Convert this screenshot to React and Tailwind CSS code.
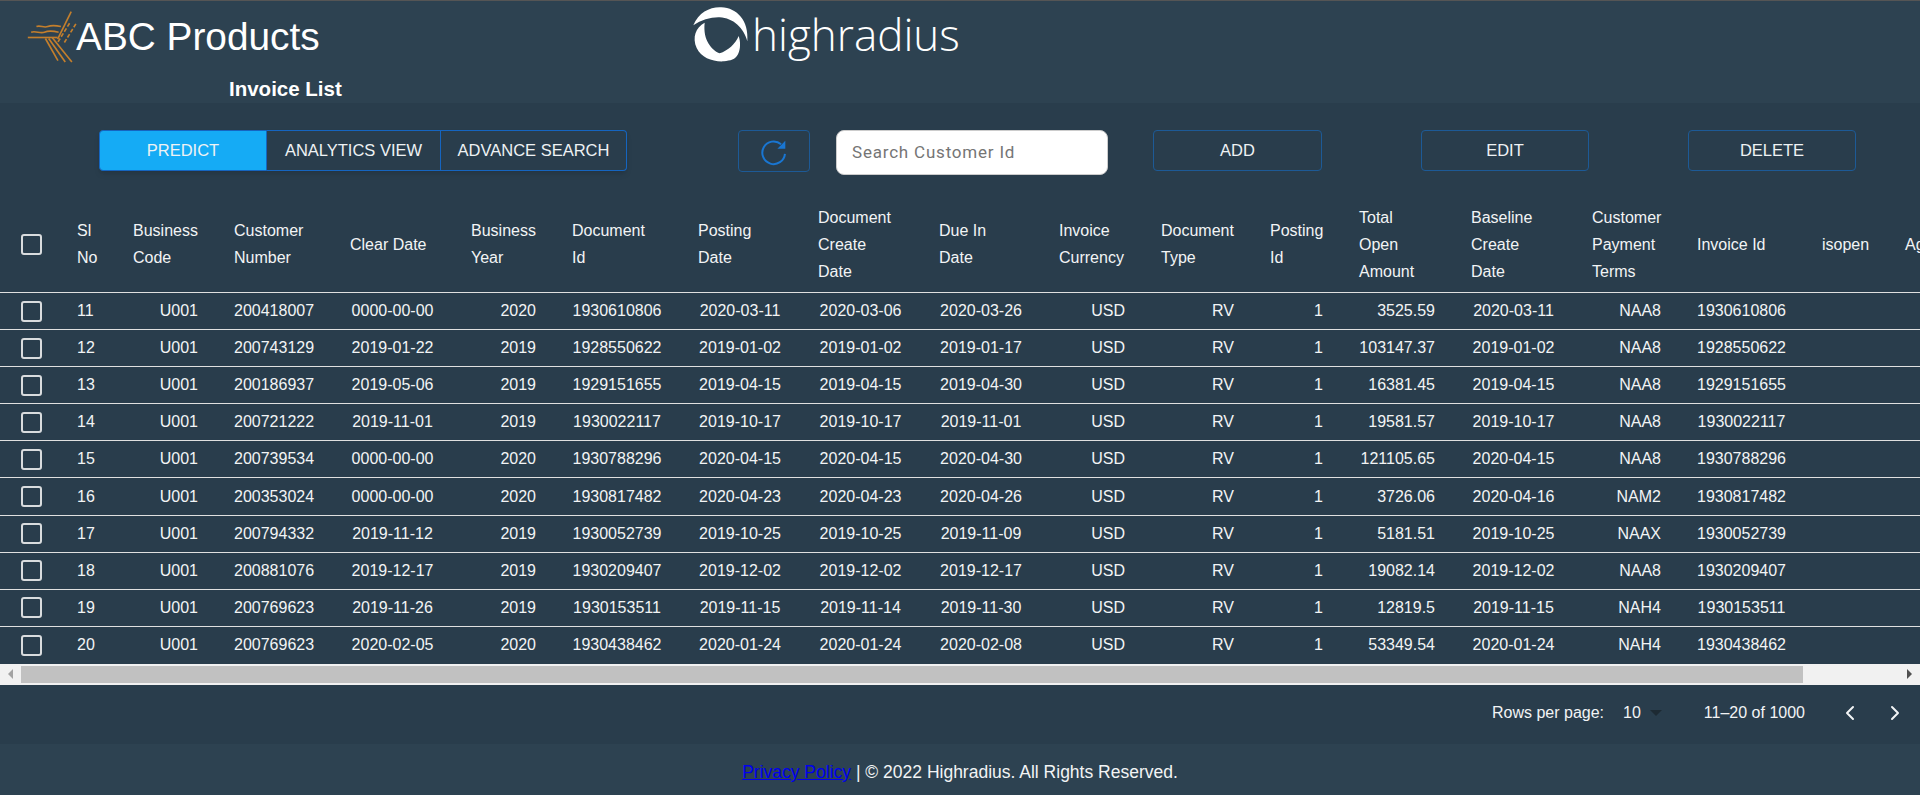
import { ChevronLeft, ChevronRight } from 'lucide-react';

const columns = [
  { label: 'Sl\nNo', width: 56 },
  { label: 'Business\nCode', width: 101 },
  { label: 'Customer\nNumber', width: 116 },
  { label: 'Clear Date', width: 121 },
  { label: 'Business\nYear', width: 101 },
  { label: 'Document\nId', width: 126 },
  { label: 'Posting\nDate', width: 120 },
  { label: 'Document\nCreate\nDate', width: 121 },
  { label: 'Due In\nDate', width: 120 },
  { label: 'Invoice\nCurrency', width: 102 },
  { label: 'Document\nType', width: 109 },
  { label: 'Posting\nId', width: 89 },
  { label: 'Total\nOpen\nAmount', width: 112 },
  { label: 'Baseline\nCreate\nDate', width: 121 },
  { label: 'Customer\nPayment\nTerms', width: 105 },
  { label: 'Invoice Id', width: 125 },
  { label: 'isopen', width: 83 },
  { label: 'Aging Bucket', width: 133 },
];

const rows = [
  [11, 'U001', '200418007', '0000-00-00', 2020, '1930610806', '2020-03-11', '2020-03-06', '2020-03-26', '3525.59', '2020-03-11', 'NAA8'],
  [12, 'U001', '200743129', '2019-01-22', 2019, '1928550622', '2019-01-02', '2019-01-02', '2019-01-17', '103147.37', '2019-01-02', 'NAA8'],
  [13, 'U001', '200186937', '2019-05-06', 2019, '1929151655', '2019-04-15', '2019-04-15', '2019-04-30', '16381.45', '2019-04-15', 'NAA8'],
  [14, 'U001', '200721222', '2019-11-01', 2019, '1930022117', '2019-10-17', '2019-10-17', '2019-11-01', '19581.57', '2019-10-17', 'NAA8'],
  [15, 'U001', '200739534', '0000-00-00', 2020, '1930788296', '2020-04-15', '2020-04-15', '2020-04-30', '121105.65', '2020-04-15', 'NAA8'],
  [16, 'U001', '200353024', '0000-00-00', 2020, '1930817482', '2020-04-23', '2020-04-23', '2020-04-26', '3726.06', '2020-04-16', 'NAM2'],
  [17, 'U001', '200794332', '2019-11-12', 2019, '1930052739', '2019-10-25', '2019-10-25', '2019-11-09', '5181.51', '2019-10-25', 'NAAX'],
  [18, 'U001', '200881076', '2019-12-17', 2019, '1930209407', '2019-12-02', '2019-12-02', '2019-12-17', '19082.14', '2019-12-02', 'NAA8'],
  [19, 'U001', '200769623', '2019-11-26', 2019, '1930153511', '2019-11-15', '2019-11-14', '2019-11-30', '12819.5', '2019-11-15', 'NAH4'],
  [20, 'U001', '200769623', '2020-02-05', 2020, '1930438462', '2020-01-24', '2020-01-24', '2020-02-08', '53349.54', '2020-01-24', 'NAH4'],
];

function Checkbox() {
  return <div className="w-[21px] h-[21px] ml-[21px] border-2 border-[#d9dcde] rounded-[3px]" />;
}

function AbcLogo() {
  return (
    <svg viewBox="50 30 150 160" className="w-[50px] h-[53px] shrink-0 text-[#c47f2c]" fill="none" stroke="currentColor" strokeWidth="5">
      <path d="M52 113H142" />
      <path d="M183 35L142 118" />
      <path d="M105 116L143 183" />
      <path d="M115 116L165 187" />
      <path d="M126 114L185 187" />
      <path d="M78 80C90 75 100 85 112 80S135 76 152 80" />
      <path d="M62 97C75 92 90 102 102 97S128 93 145 97" />
      <path d="M178 70L142 128" strokeDasharray="12 6" />
      <path d="M197 72L160 132" strokeDasharray="12 6" />
    </svg>
  );
}

function HighradiusMark() {
  return (
    <svg viewBox="0 0 192 180" className="w-[64px] h-[60px] shrink-0" fill="#fff">
      <path d="M16 64C32 24 68 8 100 10C147 12 183 50 178 112C168 72 135 42 95 40C70 39 40 47 16 64Z" />
      <path d="M50 56C23 70 12 100 26 132C40 162 75 174 108 172C127 170 142 167 150 151C158 135 158 113 152 96C142 120 120 140 95 148C72 138 44 110 50 56Z" />
    </svg>
  );
}

function OutlineButton({ children, className }) {
  return (
    <button className={`h-[41px] border border-[#1d5a96] rounded-[4px] text-[16.5px] text-[#eef2f4] ${className}`}>
      {children}
    </button>
  );
}

export default function App() {
  return (
    <div className="w-[1920px] h-[795px] overflow-hidden flex flex-col bg-[#293d4c] text-[#f2f4f5] font-['Liberation_Sans',Arial,sans-serif]">
      {/* header */}
      <div className="h-[103px] shrink-0 flex border-t border-[#555] bg-[#2d4251]">
        <div className="w-[688px] shrink-0">
          <div className="flex items-center pl-[27px] pt-[9px]">
            <AbcLogo />
            <span className="text-[38.8px] leading-[53px] text-white -ml-[1px]">ABC Products</span>
          </div>
          <h1 className="ml-[229px] mt-[12px] text-[20.5px] leading-[28px] font-bold text-white">Invoice List</h1>
        </div>
        <div className="flex items-start pt-[3px]">
          <HighradiusMark />
          <span className="font-['Open_Sans',sans-serif] font-light text-[44px] leading-[60px] text-white">highradius</span>
        </div>
      </div>

      {/* actions */}
      <div className="h-[76px] shrink-0 pt-[27px] pl-[99px] flex items-start">
        <div className="flex w-[528px] h-[41px] rounded-[4px] shadow-md text-[16.5px] text-[#eef2f4]">
          <button className="w-[168px] bg-[#15abf5] border border-[#1565c0] rounded-l-[4px]">PREDICT</button>
          <button className="w-[174px] border-y border-r border-[#1565c0]">ANALYTICS VIEW</button>
          <button className="w-[186px] border-y border-r border-[#1565c0] rounded-r-[4px]">ADVANCE SEARCH</button>
        </div>
        <button className="ml-[111px] w-[72px] h-[42px] border border-[#1d5a96] rounded-[4px] flex items-center justify-center">
          <svg viewBox="0 0 24 24" className="w-[34px] h-[34px]" fill="#1976d2">
            <path d="M17 7.2A8 8 0 1 0 19.73 14" fill="none" stroke="#1976d2" strokeWidth="1.4" />
            <path d="M14.4 10.4H20V4.8z" />
          </svg>
        </button>
        <input
          placeholder="Search Customer Id"
          className="ml-[26px] w-[272px] h-[45px] pl-[15px] pb-[2px] bg-white rounded-[8px] border border-[#ccc] font-['Roboto',sans-serif] text-[17px] tracking-[0.8px] text-[#333] placeholder:text-[#757575]"
        />
        <OutlineButton className="ml-[45px] w-[169px]">ADD</OutlineButton>
        <OutlineButton className="ml-[99px] w-[168px]">EDIT</OutlineButton>
        <OutlineButton className="ml-[99px] w-[168px]">DELETE</OutlineButton>
      </div>

      {/* table */}
      <div className="overflow-hidden shrink-0">
        <table className="table-fixed w-[2020px] border-separate border-spacing-0 text-[16px]">
          <colgroup>
            <col className="w-[59px]" />
            {columns.map((col) => (
              <col key={col.label} style={{ width: col.width }} />
            ))}
          </colgroup>
          <thead>
            <tr className="h-[114px]">
              <th className="p-0 pt-[17px] border-b border-[#e0e0e0]"><Checkbox /></th>
              {columns.map((col) => (
                <th key={col.label} className="px-[18px] pt-[17px] pb-0 font-normal text-left leading-[27px] whitespace-pre-line border-b border-[#e0e0e0]">
                  {col.label}
                </th>
              ))}
            </tr>
          </thead>
          <tbody>
            {rows.map((row, index) => {
              const [sl, code, customer, clear, year, docId, posting, created, due, amount, baseline, terms] = row;
              const border = index < rows.length - 1 ? 'border-b border-[#e0e0e0]' : '';
              return (
                <tr key={sl} className="h-[37.1px]">
                  <td className={`p-0 ${border}`}><Checkbox /></td>
                  <td className={`px-[18px] py-0 text-left ${border}`}>{sl}</td>
                  <td className={`px-[18px] py-0 text-right ${border}`}>{code}</td>
                  <td className={`px-[18px] py-0 text-center ${border}`}>{customer}</td>
                  <td className={`px-[18px] py-0 text-center ${border}`}>{clear}</td>
                  <td className={`px-[18px] py-0 text-right ${border}`}>{year}</td>
                  <td className={`px-[18px] py-0 text-center ${border}`}>{docId}</td>
                  <td className={`px-[18px] py-0 text-center ${border}`}>{posting}</td>
                  <td className={`px-[18px] py-0 text-center ${border}`}>{created}</td>
                  <td className={`px-[18px] py-0 text-center ${border}`}>{due}</td>
                  <td className={`px-[18px] py-0 text-right ${border}`}>USD</td>
                  <td className={`px-[18px] py-0 text-right ${border}`}>RV</td>
                  <td className={`px-[18px] py-0 text-right ${border}`}>1</td>
                  <td className={`px-[18px] py-0 text-right ${border}`}>{amount}</td>
                  <td className={`px-[18px] py-0 text-center ${border}`}>{baseline}</td>
                  <td className={`px-[18px] py-0 text-right ${border}`}>{terms}</td>
                  <td className={`px-[18px] py-0 text-center ${border}`}>{docId}</td>
                  <td className={border} />
                  <td className={border} />
                </tr>
              );
            })}
          </tbody>
        </table>
      </div>

      {/* scrollbar */}
      <div className="h-[21px] shrink-0 flex items-center bg-[#f1f1f1]">
        <div className="w-[21px] flex justify-center">
          <div className="w-0 h-0 border-y-[5px] border-y-transparent border-r-[5px] border-r-[#a3a3a3]" />
        </div>
        <div className="w-[1782px] h-[17px] bg-[#c1c1c1]" />
        <div className="flex-1 flex justify-end pr-[8px]">
          <div className="w-0 h-0 border-y-[5px] border-y-transparent border-l-[5px] border-l-[#505050]" />
        </div>
      </div>

      {/* pagination */}
      <div className="h-[59px] shrink-0 flex items-center pb-[2px] text-[16px]">
        <span className="ml-[1492px]">Rows per page:</span>
        <span className="ml-[19px]">10</span>
        <span className="ml-[9px] w-0 h-0 border-x-[6px] border-x-transparent border-t-[6px] border-t-[#1d2a33]" />
        <span className="ml-[42px]">11–20 of 1000</span>
        <ChevronLeft className="ml-[33px] w-[24px] h-[24px]" />
        <ChevronRight className="ml-[21px] w-[24px] h-[24px]" />
      </div>

      {/* footer */}
      <div className="flex-1 flex items-center justify-center pt-[5px] bg-[#2d4251] text-[17.5px]">
        <a href="#" className="text-[#0000ee] underline">Privacy Policy</a>
        <span className="whitespace-pre"> | © 2022 Highradius. All Rights Reserved.</span>
      </div>
    </div>
  );
}
